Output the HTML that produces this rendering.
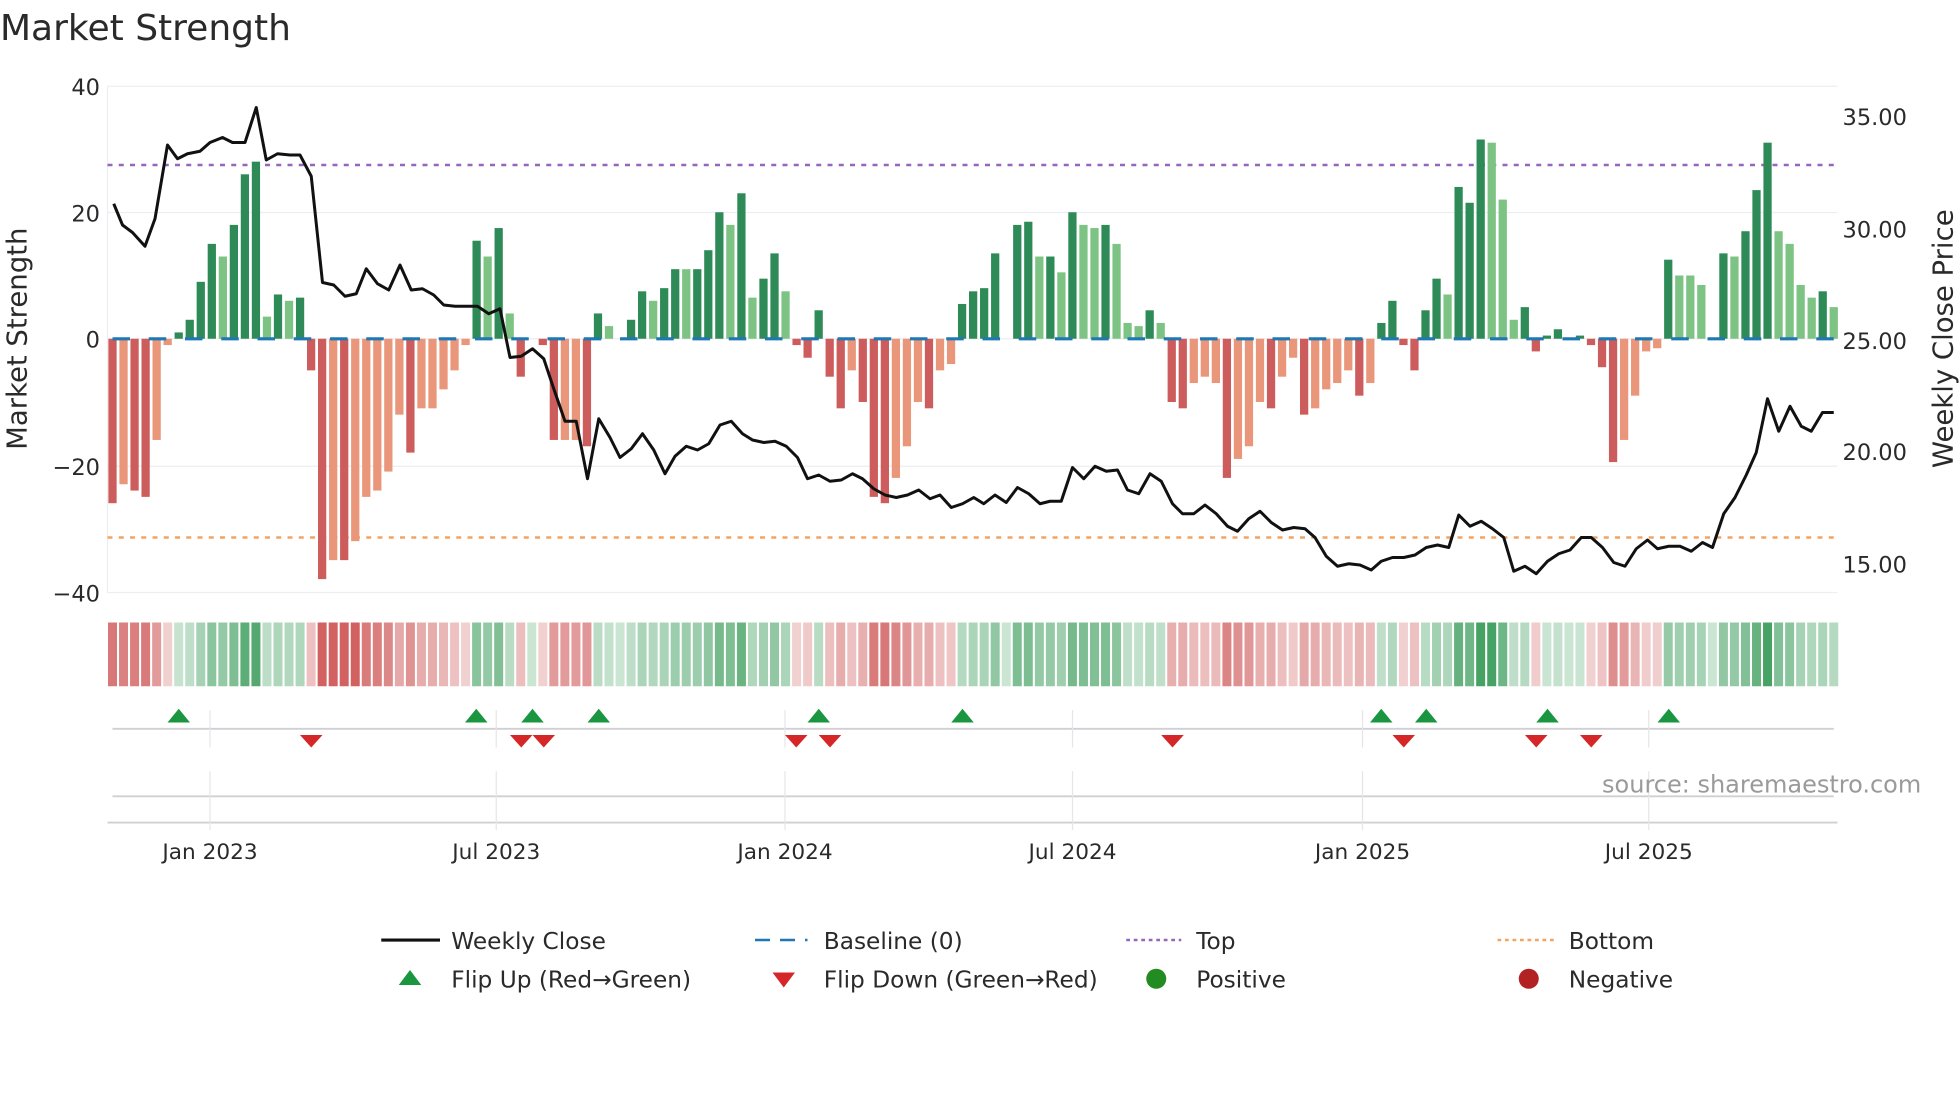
<!DOCTYPE html>
<html><head><meta charset="utf-8"><style>
html,body{margin:0;padding:0;background:#fff;width:1960px;height:1102px;overflow:hidden}
svg{display:block}
text{font-family:"DejaVu Sans","Liberation Sans",sans-serif;fill:#2a2a2a}
</style></head><body>
<svg id="s" width="1960" height="1102" viewBox="0 0 1568 881.6" xmlns="http://www.w3.org/2000/svg">
<text x="0" y="32" font-size="28.8">Market Strength</text>
<g stroke="#eceef2" stroke-width="1">
<line x1="86" x2="1470" y1="69" y2="69"/><line x1="86" x2="1470" y1="170" y2="170"/><line x1="86" x2="1470" y1="271" y2="271"/><line x1="86" x2="1470" y1="373" y2="373"/><line x1="86" x2="1470" y1="474" y2="474"/>
<line x1="86" x2="86" y1="69" y2="474"/>
</g>
<g font-size="18" text-anchor="end">
<text x="80" y="76">40</text><text x="80" y="177">20</text><text x="80" y="278">0</text><text x="80" y="380">−20</text><text x="80" y="481">−40</text>
</g>
<g font-size="18">
<text x="1474" y="100">35.00</text><text x="1474" y="190">30.00</text><text x="1474" y="279">25.00</text><text x="1474" y="368">20.00</text><text x="1474" y="458">15.00</text>
</g>
<text font-size="22" transform="translate(21,271) rotate(-90)" text-anchor="middle">Market Strength</text>
<text font-size="22" transform="translate(1562,271) rotate(-90)" text-anchor="middle">Weekly Close Price</text>
<line x1="86" x2="1470" y1="132" y2="132" stroke="#9467bd" stroke-width="2" stroke-dasharray="4 5"/>
<line x1="86" x2="1470" y1="430" y2="430" stroke="#f4a460" stroke-width="2" stroke-dasharray="4 5"/>
<g id="bars"></g>
<line x1="90" x2="1470" y1="271" y2="271" stroke="#1f77b4" stroke-width="2.5" stroke-dasharray="14 15"/>
<polyline id="price" fill="none" stroke="#111" stroke-width="2.4" stroke-linejoin="round"/>
<g id="strip"></g>
<g stroke="#d0d0d4" stroke-width="1.5">
<line x1="90" x2="1467" y1="583" y2="583"/><line x1="90" x2="1467" y1="637" y2="637"/><line x1="86" x2="1470" y1="658" y2="658"/>
</g>
<g id="vt" stroke="#e6e6ea" stroke-width="1"></g>
<g id="mk"></g>
<g font-size="17.3" text-anchor="middle">
<text x="168" y="687">Jan 2023</text><text x="397" y="687">Jul 2023</text><text x="628" y="687">Jan 2024</text><text x="858" y="687">Jul 2024</text><text x="1090" y="687">Jan 2025</text><text x="1319" y="687">Jul 2025</text>
</g>
<text x="1537" y="634" font-size="19.2" text-anchor="end" style="fill:#9a9a9a">source: sharemaestro.com</text>
<g font-size="18.6">
<line x1="305" x2="352" y1="752" y2="752" stroke="#111" stroke-width="2.5"/><text x="361" y="759">Weekly Close</text>
<line x1="604" x2="646" y1="752" y2="752" stroke="#1f77b4" stroke-width="2" stroke-dasharray="12 8"/><text x="659" y="759">Baseline (0)</text>
<line x1="901" x2="945" y1="752" y2="752" stroke="#9467bd" stroke-width="2" stroke-dasharray="3 3"/><text x="957" y="759">Top</text>
<line x1="1198" x2="1243" y1="752" y2="752" stroke="#f4a460" stroke-width="2" stroke-dasharray="3 3"/><text x="1255" y="759">Bottom</text>
<polygon points="319,788 337,788 328,776" fill="#1a9641"/><text x="361" y="790">Flip Up (Red→Green)</text>
<polygon points="618,778 636,778 627,790" fill="#d62728"/><text x="659" y="790">Flip Down (Green→Red)</text>
<circle cx="925" cy="783" r="8" fill="#228b22"/><text x="957" y="790">Positive</text>
<circle cx="1223" cy="783" r="8" fill="#b22222"/><text x="1255" y="790">Negative</text>
</g>
</svg>
<script>
var NS="http://www.w3.org/2000/svg";
function el(t,a,p){var e=document.createElementNS(NS,t);for(var k in a)e.setAttribute(k,a[k]);document.getElementById(p).appendChild(e);return e;}
var d="-26d -23l -24d -25d -16l -1l 1d 3d 9d 15d 13l 18d 26d 28d 3.5l 7d 6l 6.5d -5d -38d -35l -35d -32l -25l -24l -21l -12l -18d -11l -11l -8l -5l -1l 15.5d 13l 17.5d 4l -6d 0d -1d -16d -16l -16l -17d 4d 2l 0d 3d 7.5d 6l 8d 11d 11l 11d 14d 20d 18l 23d 6.5l 9.5d 13.5d 7.5l -1d -3d 4.5d -6d -11d -5l -10d -25d -26d -22l -17l -10l -11d -5l -4l 5.5d 7.5d 8d 13.5d 0d 18d 18.5d 13l 13d 10.5l 20d 18l 17.5l 18d 15l 2.5l 2l 4.5d 2.5l -10d -11d -7l -6l -7l -22d -19l -17l -10l -11d -6l -3l -12d -11l -8l -7l -5l -9d -7l 2.5d 6d -1d -5d 4.5d 9.5d 7l 24d 21.5d 31.5d 31l 22l 3l 5d -2d 0.5d 1.5d 0d 0.5d -1d -4.5d -19.5d -16l -9l -2l -1.5l 12.5d 10l 10l 8.5l 0d 13.5d 13l 17d 23.5d 31d 17l 15l 8.5l 6.5l 7.5d 5l".split(" ");
var n=d.length,step=(1467-90)/(n-1);
d.forEach(function(s,i){var v=parseFloat(s),dk=s.slice(-1)=="d",x=90+i*step;
 var c=v>=0?(dk?"#2e8b57":"#7dc383"):(dk?"#cd5c5c":"#e9967a");
 var h=Math.abs(v)*5.06;
 if(h>0.3)el("rect",{x:x-3.3,width:6.6,y:v>=0?271-h:271,height:h,fill:c},"bars");
 var a=0.25+0.65*Math.min(1,Math.abs(v)/32);
 el("rect",{x:x-3.6,width:7.2,y:498,height:51,fill:v>=0?"rgba(46,150,80,"+a+")":"rgba(205,80,80,"+a+")"},"strip");
});
var p="91,163 98,180 106,186 116,197 124,175 134,116 142,127 150,123 160,121 168,114 178,110 186,114 196,114 205,86 213,128 222,123 232,124 240,124 249,141 258,226 267,228 276,237 285,235 293,215 302,227 311,232 320,212 329,232 338,231 347,236 355,244 364,245 373,245 382,245 391,251 400,247 408,286 417,285 426,279 435,287 443,311 452,337 461,337 470,383 479,335 488,350 496,366 505,359 514,347 523,360 532,379 540,365 549,357 558,360 567,355 576,340 585,337 594,347 602,352 611,354 620,353 629,357 638,366 646,383 655,380 664,385 673,384 682,379 690,383 699,391 708,396 717,398 726,396 735,392 744,399 752,396 761,406 770,403 779,398 787,403 796,396 805,402 814,390 823,395 832,403 840,401 849,401 858,374 867,383 876,373 885,377 894,376 902,392 911,395 920,379 929,385 938,403 946,411 955,411 964,404 973,411 982,421 990,425 999,415 1008,409 1017,418 1026,424 1035,422 1044,423 1052,430 1061,445 1070,453 1079,451 1088,452 1097,456 1105,449 1114,446 1123,446 1132,444 1141,438 1150,436 1159,438 1167,412 1176,421 1185,417 1194,423 1203,430 1211,457 1220,453 1229,459 1238,449 1247,443 1256,440 1265,430 1273,430 1282,438 1291,450 1300,453 1309,439 1318,432 1326,439 1335,437 1344,437 1353,441 1362,434 1370,438 1379,411 1388,398 1397,380 1405,362 1414,319 1423,345 1432,325 1441,341 1449,345 1458,330 1467,330";
document.getElementById("price").setAttribute("points",p);
[168,397,628,858,1090,1319].forEach(function(x){el("line",{x1:x,x2:x,y1:568,y2:598},"vt");el("line",{x1:x,x2:x,y1:617,y2:664},"vt");});
[143,381,426,479,655,770,1105,1141,1238,1335].forEach(function(x){el("polygon",{points:(x-9)+",578 "+(x+9)+",578 "+x+",567",fill:"#1a9641"},"mk");});
[249,417,435,637,664,938,1123,1229,1273].forEach(function(x){el("polygon",{points:(x-9)+",588 "+(x+9)+",588 "+x+",598",fill:"#d62728"},"mk");});
</script>
</body></html>
